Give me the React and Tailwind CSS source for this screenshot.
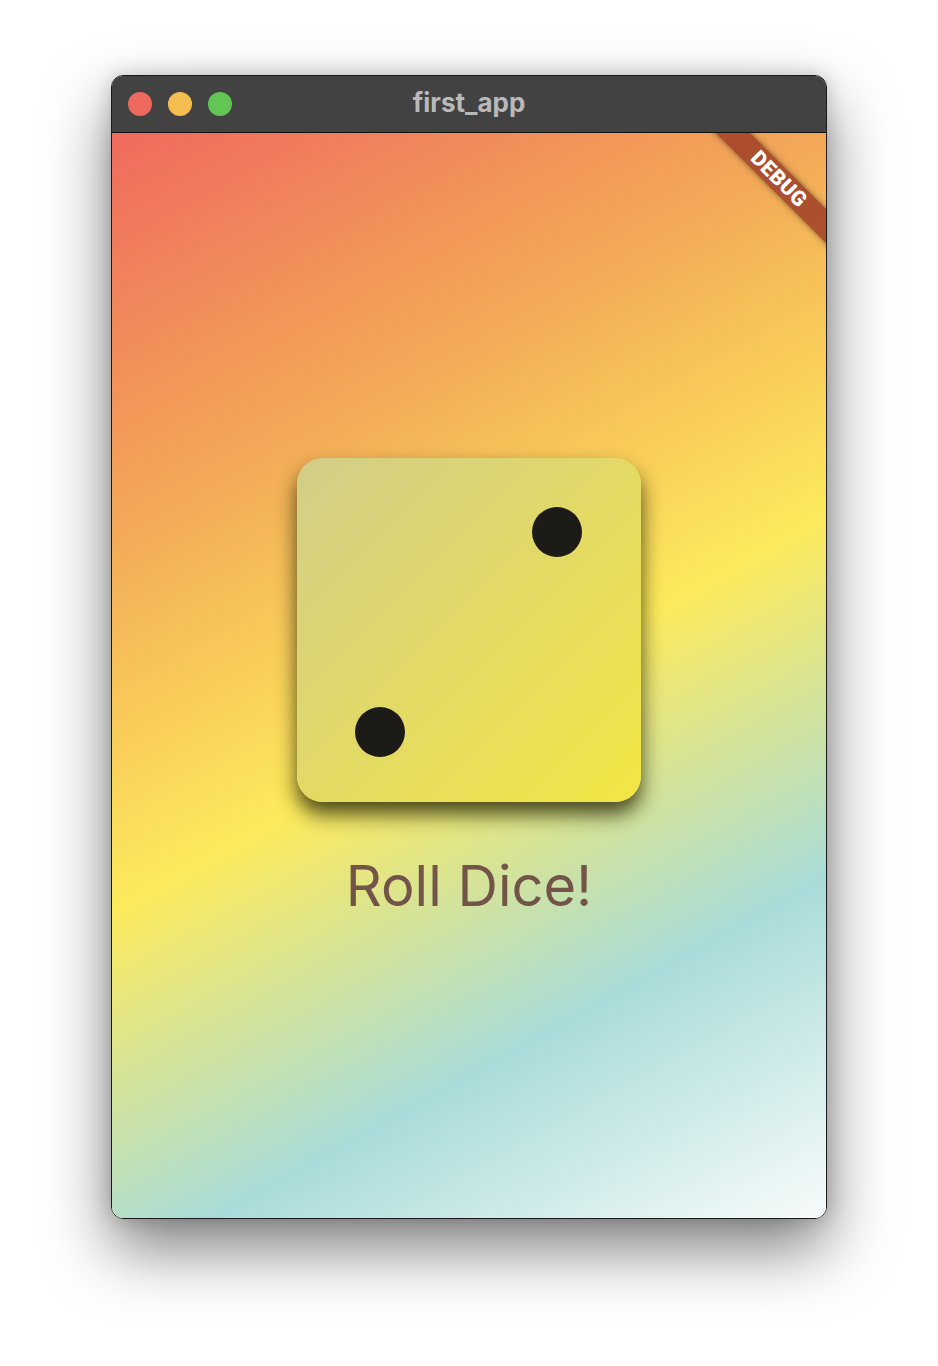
import React from 'react';

function TrafficLights() {
  return (
    <div className="absolute left-[16px] top-[16px] flex gap-[16px]">
      <span className="block w-[24px] h-[24px] rounded-full bg-[#ee6a5f]" />
      <span className="block w-[24px] h-[24px] rounded-full bg-[#f5be4f]" />
      <span className="block w-[24px] h-[24px] rounded-full bg-[#62c554]" />
    </div>
  );
}

function Dice() {
  return (
    <div className="relative w-[344px] h-[344px] rounded-[26px] bg-[linear-gradient(135deg,#d2cd88_0%,#f3e644_100%)] shadow-[0_12px_20px_rgba(45,45,10,0.85)]">
      <span className="absolute left-[235px] top-[49px] w-[50px] h-[50px] rounded-full bg-[#1c1b17]" />
      <span className="absolute left-[58px] top-[249px] w-[50px] h-[50px] rounded-full bg-[#1c1b17]" />
    </div>
  );
}

export default function App() {
  return (
    <div className="w-[938px] h-[1366px] bg-white pt-[75px] pl-[111px]" style={{ fontFamily: 'Inter, "Noto Sans", sans-serif' }}>
      <div className="w-[716px] rounded-[12px] border border-[#1a1a1a] overflow-hidden shadow-[0_30px_65px_rgba(0,0,0,0.5),0_0_20px_rgba(0,0,0,0.18)]">
        <div className="relative h-[57px] bg-[#424242] border-b border-[#111] flex items-center justify-center">
          <TrafficLights />
          <span className="text-[26px] font-bold text-[#b9b9b9] leading-none -mt-[3px]">first_app</span>
        </div>
        <div className="relative h-[1085px] overflow-hidden bg-[linear-gradient(151deg,#ef6a5e_0%,#f3a957_27%,#fdea5c_52.5%,#a9dcd9_77%,#f8fbfb_100%)] flex flex-col items-center pt-[325px]">
          <Dice />
          <div className="mt-[56px] text-[56px] leading-[1] text-[#725548]">Roll Dice!</div>
          <div className="absolute left-[547px] top-[34px] w-[240px] h-[24px] rotate-45 bg-[#a84a2c]/95 shadow-[0_0_6px_rgba(0,0,0,0.5)] flex items-center justify-center">
            <span className="text-[21px] font-black text-white tracking-[0.5px] leading-none" style={{ fontFamily: 'Roboto, Inter, sans-serif' }}>DEBUG</span>
          </div>
        </div>
      </div>
    </div>
  );
}
